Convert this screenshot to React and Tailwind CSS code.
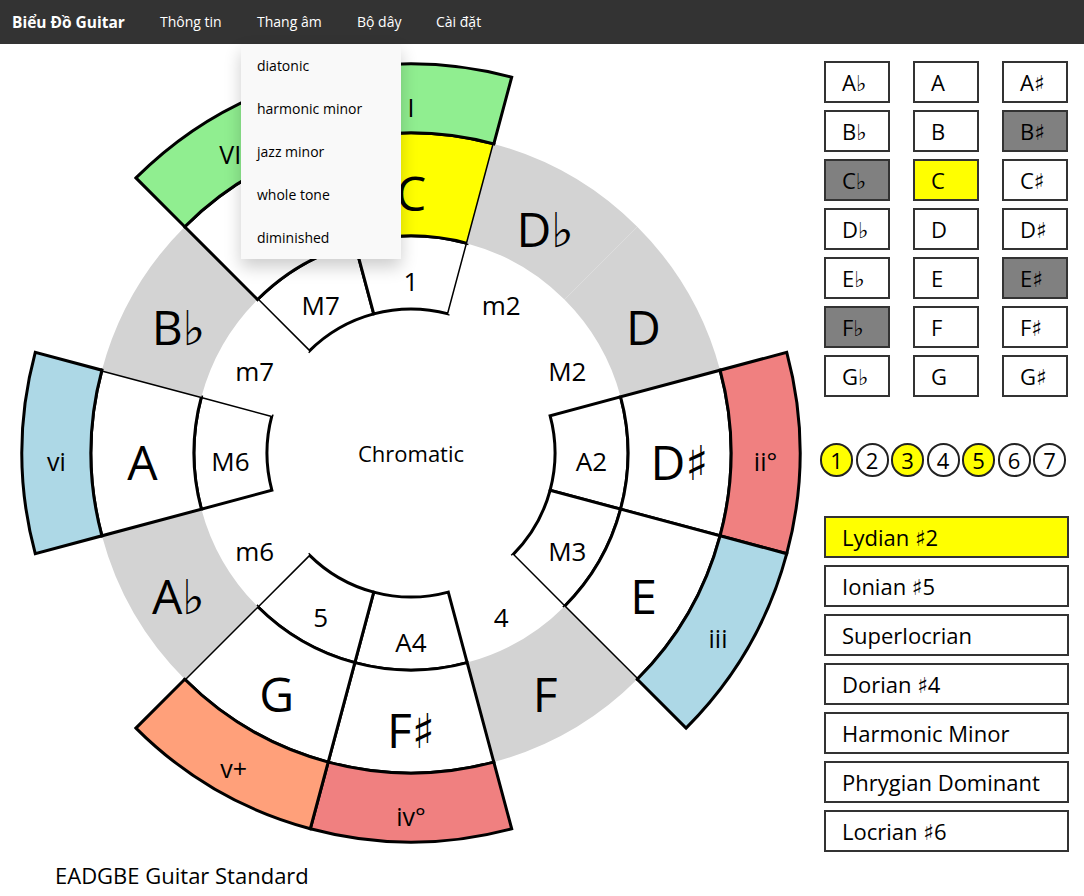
import React from "react";

const font = { fontFamily: '"Open Sans", "DejaVu Sans", sans-serif' };

const CX = 411;
const CY = 409;
const R0 = 144;
const R1 = 217;
const R2 = 320;
const R3 = 389;

const notes = ["C", "D♭", "D", "D♯", "E", "F", "F♯", "G", "A♭", "A", "B♭", "B"];
const intervals = ["1", "m2", "M2", "A2", "M3", "4", "A4", "5", "m6", "M6", "m7", "M7"];
const inScale = [0, 3, 4, 6, 7, 9, 11];
const chords = {
  0: ["I", "#90ee90"],
  3: ["ii°", "#f08080"],
  4: ["iii", "#add8e6"],
  6: ["iv°", "#f08080"],
  7: ["v+", "#ffa07a"],
  9: ["vi", "#add8e6"],
  11: ["VII", "#90ee90"],
};

const pt = (r, deg) => {
  const a = (deg * Math.PI) / 180;
  return [CX + r * Math.sin(a), CY - r * Math.cos(a)];
};

const sector = (i, r1, r2) => {
  const a1 = i * 30 - 15;
  const a2 = i * 30 + 15;
  const [x1, y1] = pt(r2, a1);
  const [x2, y2] = pt(r2, a2);
  const [x3, y3] = pt(r1, a2);
  const [x4, y4] = pt(r1, a1);
  return `M${x1} ${y1} A${r2} ${r2} 0 0 1 ${x2} ${y2} L${x3} ${y3} A${r1} ${r1} 0 0 0 ${x4} ${y4} Z`;
};

const Label = ({ i, r, size, children }) => {
  const [x, y] = pt(r, i * 30);
  return (
    <text x={x} y={y + 8} fontSize={size} textAnchor="middle" dominantBaseline="central" fill="#000">
      {children}
    </text>
  );
};

const Wheel = () => {
  const idx = [...Array(12).keys()];
  // interval ring starts at M7 so the m7 cell sits over its edge
  const intervalOrder = [11, 0, 1, 2, 3, 4, 5, 6, 7, 8, 9, 10];
  return (
    <svg width="820" height="812" style={font}>
      {intervalOrder.map((i) =>
        inScale.includes(i) ? (
          <path key={"i" + i} d={sector(i, R0, R1)} fill="#fff" stroke="#000" strokeWidth="3" />
        ) : (
          <path key={"i" + i} d={sector(i, R0, R1)} fill="#fff" />
        )
      )}
      {idx.map((i) =>
        inScale.includes(i) ? (
          <path key={"n" + i} d={sector(i, R1, R2)} fill={i === 0 ? "#ffff00" : "#fff"} stroke="#000" strokeWidth="3" />
        ) : (
          <path key={"n" + i} d={sector(i, R1, R2)} fill="#d3d3d3" />
        )
      )}
      {inScale.map((i) => (
        <path key={"c" + i} d={sector(i, R2, R3)} fill={chords[i][1]} stroke="#000" strokeWidth="3" />
      ))}
      {idx.map((i) => (
        <Label key={"il" + i} i={i} r={(R0 + R1) / 2} size={26}>
          {intervals[i]}
        </Label>
      ))}
      {idx.map((i) => (
        <Label key={"nl" + i} i={i} r={(R1 + R2) / 2} size={48}>
          {notes[i]}
        </Label>
      ))}
      {inScale.map((i) => (
        <Label key={"cl" + i} i={i} r={(R2 + R3) / 2} size={25}>
          {chords[i][0]}
        </Label>
      ))}
      <text x={CX} y={CY} fontSize="22" textAnchor="middle" dominantBaseline="central">
        Chromatic
      </text>
    </svg>
  );
};

const noteGrid = [
  ["A♭", ""], ["A", ""], ["A♯", ""],
  ["B♭", ""], ["B", ""], ["B♯", "gray"],
  ["C♭", "gray"], ["C", "yellow"], ["C♯", ""],
  ["D♭", ""], ["D", ""], ["D♯", ""],
  ["E♭", ""], ["E", ""], ["E♯", "gray"],
  ["F♭", "gray"], ["F", ""], ["F♯", ""],
  ["G♭", ""], ["G", ""], ["G♯", ""],
];

const modes = [
  "Lydian ♯2",
  "Ionian ♯5",
  "Superlocrian",
  "Dorian ♯4",
  "Harmonic Minor",
  "Phrygian Dominant",
  "Locrian ♯6",
];

const scaleMenu = ["diatonic", "harmonic minor", "jazz minor", "whole tone", "diminished"];

export default function App() {
  return (
    <div className="w-[1084px] h-[896px] overflow-hidden bg-white text-black" style={font}>
      <nav className="h-[44px] bg-[#333] flex text-white whitespace-nowrap leading-[44px]">
        <div className="w-[140px] pl-3 text-[15.5px] font-bold">Biểu Đồ Guitar</div>
        <div className="flex gap-1 ml-1 text-[14px]">
          <div className="w-[93px] px-4">Thông tin</div>
          <div className="relative w-[96px] px-4">
            Thang âm
            <div className="absolute left-0 top-[44px] z-10 w-[160px] bg-[#f9f9f9] text-black shadow-[0_8px_16px_0_rgba(0,0,0,0.2)]">
              {scaleMenu.map((s) => (
                <div key={s} className="px-4 py-3 text-[14px] leading-[19px]">
                  {s}
                </div>
              ))}
            </div>
          </div>
          <div className="w-[75px] px-4">Bộ dây</div>
          <div className="px-4">Cài đặt</div>
        </div>
      </nav>

      <div className="flex">
        <div className="w-[824px]">
          <Wheel />
          <div className="ml-[55px] mt-[4px] text-[22px] leading-[30px]">EADGBE Guitar Standard</div>
        </div>

        <div className="pt-[17px]">
          <div className="grid grid-cols-[66px_66px_66px] gap-x-[23px] gap-y-[7px]">
            {noteGrid.map(([n, c]) => (
              <div
                key={n}
                className={
                  "h-[42px] border-2 border-[#333] pl-4 flex items-center text-[22px] " +
                  (c === "gray" ? "bg-[#808080]" : c === "yellow" ? "bg-[#ffff00]" : "bg-white")
                }
              >
                {n}
              </div>
            ))}
          </div>

          <div className="mt-[46px] -ml-1 flex gap-[2.5px]">
            {[1, 2, 3, 4, 5, 6, 7].map((d) => (
              <div
                key={d}
                className={
                  "w-[33px] h-[34px] rounded-full border-2 border-[#222] flex items-center justify-center text-[22px] " +
                  (d % 2 === 1 && d < 6 ? "bg-[#ffff00]" : "bg-white")
                }
              >
                {d}
              </div>
            ))}
          </div>

          <div className="mt-[39px] flex flex-col gap-[7px]">
            {modes.map((m, i) => (
              <div
                key={m}
                className={
                  "w-[245px] h-[42px] border-2 border-[#333] pl-4 flex items-center text-[22px] " +
                  (i === 0 ? "bg-[#ffff00]" : "bg-white")
                }
              >
                {m}
              </div>
            ))}
          </div>
        </div>
      </div>
    </div>
  );
}
